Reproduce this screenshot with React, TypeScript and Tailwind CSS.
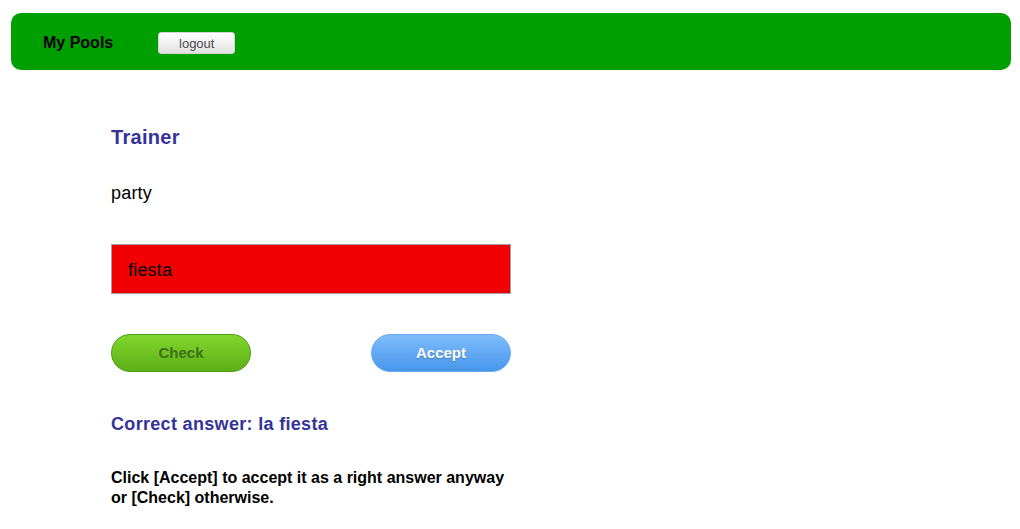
export default function App() {
  return (
    <div className="min-h-screen bg-white font-['Liberation_Sans',Arial,sans-serif] text-black">
      {/* Top bar */}
      <div className="ml-[11px] mr-[9px] mt-[13px] flex h-[57px] items-center rounded-[10px] bg-[#009f00] pl-[32px] pt-[2px]">
        <span className="text-[16px] font-bold leading-none">My Pools</span>
        <button className="ml-[45px] mt-[1px] h-[22px] w-[77px] rounded-[3px] border border-[#d4d4d4] bg-gradient-to-b from-white to-[#e2e2e2] text-[13px] leading-none text-[#4a4a4a]">
          logout
        </button>
      </div>

      {/* Trainer */}
      <div className="ml-[111px] w-[400px]">
        <h2 className="mt-[56px] text-[20px] font-bold leading-[23px] tracking-[0.3px] text-[#333399]">Trainer</h2>
        <p className="mt-[34px] text-[18px] leading-[21px] tracking-[0.2px]">party</p>

        <div className="mt-[40px] flex h-[50px] items-center border border-[#a0a0a0] bg-[#f00000] pl-[16px] pt-[2px] text-[18px] tracking-[0.2px]">
          fiesta
        </div>

        <div className="mt-[40px] flex justify-between">
          <button className="h-[38px] w-[140px] rounded-full border border-[#4f9a12] bg-gradient-to-b from-[#80d62c] to-[#5cb016] text-[15px] font-bold text-[#3f6f16]">
            Check
          </button>
          <button className="h-[38px] w-[140px] rounded-full border border-[#6aaaf0] bg-gradient-to-b from-[#7dbcfb] to-[#4796ec] text-[15px] font-bold text-white [text-shadow:0_1px_1px_rgba(0,0,0,0.25)]">
            Accept
          </button>
        </div>

        <h3 className="mt-[42px] text-[18px] font-bold leading-[21px] tracking-[0.32px] text-[#333399]">Correct answer: la fiesta</h3>
        <p className="mt-[33px] text-[16px] font-bold leading-[20px]">
          Click [Accept] to accept it as a right answer anyway or [Check] otherwise.
        </p>
      </div>
    </div>
  );
}
